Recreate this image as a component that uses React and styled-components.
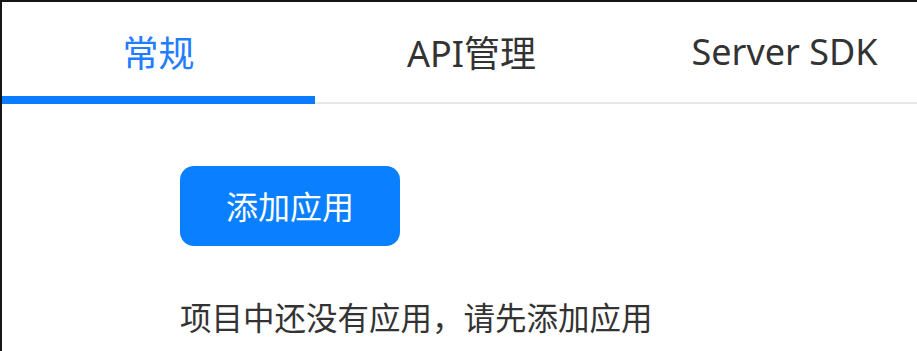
import React, { useState } from "react";
import styled, { createGlobalStyle } from "styled-components";

const Global = createGlobalStyle`
  html, body { margin: 0; padding: 0; background: #fff; }
  body { font-family: "Noto Sans", "Noto Sans CJK SC", sans-serif; overflow: hidden; }
  * { box-sizing: border-box; }
`;

const Frame = styled.div`
  width: 917px;
  height: 351px;
  border-top: 2px solid #151515;
  border-left: 2px solid #151515;
  overflow: hidden;
  background: #fff;
`;

const TabBar = styled.div`
  display: flex;
  height: 102px;
  border-bottom: 2px solid #e8e8e8;
  width: 1100px;
`;

const Tab = styled.div`
  flex: 0 0 313px;
  height: 102px;
  margin-bottom: -2px;
  display: flex;
  align-items: center;
  justify-content: center;
  padding-top: 5px;
  font-size: 36px;
  font-family: "Noto Sans", "Noto Sans CJK SC", sans-serif;
  color: ${(p) => (p.$active ? "#1f7dff" : "#333333")};
  border-bottom: 8px solid ${(p) => (p.$active ? "#0a7cff" : "transparent")};
  cursor: pointer;
  white-space: nowrap;
`;

const Content = styled.div`
  padding: 62px 0 0 178px;
  display: flex;
  flex-direction: column;
  align-items: flex-start;
`;

const AddButton = styled.button`
  width: 220px;
  height: 80px;
  border: none;
  border-radius: 14px;
  background: #0a7fff;
  color: #fff;
  font-size: 32px;
  font-family: "Noto Sans CJK SC", sans-serif;
  display: flex;
  align-items: center;
  justify-content: center;
  padding: 0 0 2px;
  cursor: pointer;
`;

const EmptyText = styled.div`
  margin-top: 46px;
  font-size: 31.5px;
  line-height: 48px;
  color: #333333;
  font-family: "Noto Sans CJK SC", sans-serif;
  white-space: nowrap;
`;

const tabs = ["常规", "API管理", "Server SDK"];

export default function App() {
  const [active, setActive] = useState(0);
  return (
    <>
      <Global />
      <Frame>
        <TabBar>
          {tabs.map((t, i) => (
            <Tab key={t} $active={i === active} onClick={() => setActive(i)}>
              {t}
            </Tab>
          ))}
        </TabBar>
        <Content>
          <AddButton>添加应用</AddButton>
          <EmptyText>项目中还没有应用，请先添加应用</EmptyText>
        </Content>
      </Frame>
    </>
  );
}
